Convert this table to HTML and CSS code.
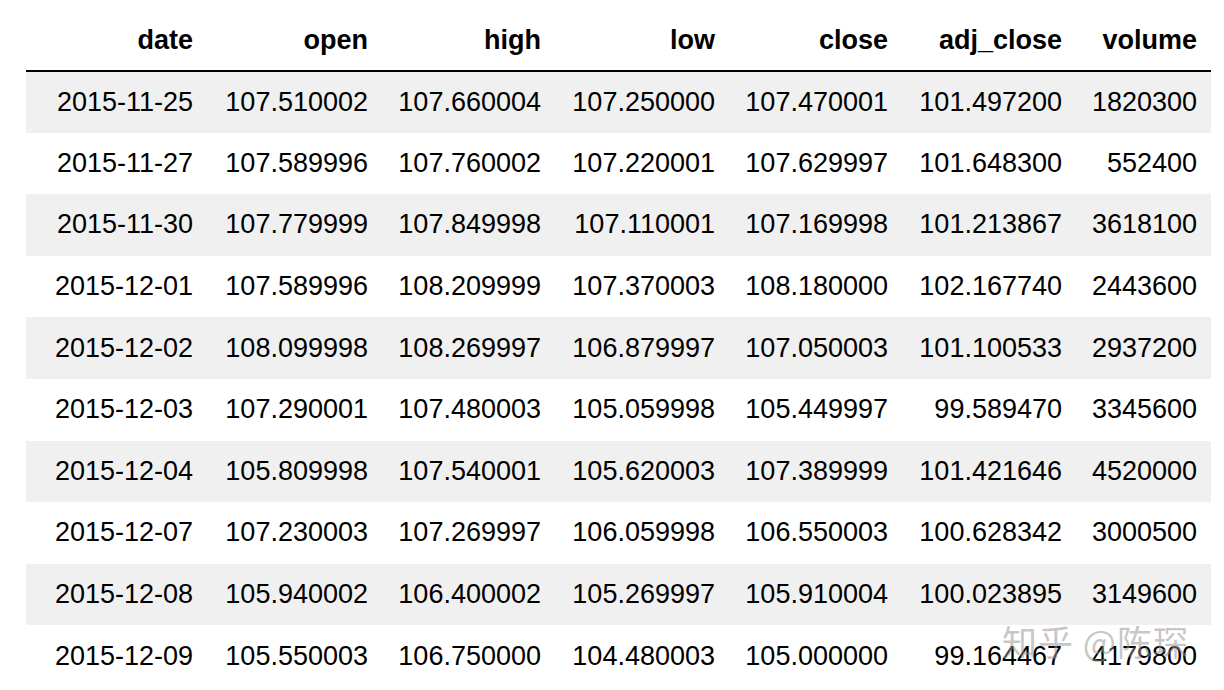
FILE: index.html
```html
<!DOCTYPE html>
<html>
<head>
<meta charset="utf-8">
<link rel="stylesheet" href="styles.css">
</head>
<body>
<div class="page">
<table class="df">
<colgroup>
<col class="c1"><col class="c2"><col class="c3"><col class="c4"><col class="c5"><col class="c6"><col class="c7">
</colgroup>
<thead>
<tr><th>date</th><th>open</th><th>high</th><th>low</th><th>close</th><th>adj_close</th><th>volume</th></tr>
</thead>
<tbody>
<tr><td>2015-11-25</td><td>107.510002</td><td>107.660004</td><td>107.250000</td><td>107.470001</td><td>101.497200</td><td>1820300</td></tr>
<tr><td>2015-11-27</td><td>107.589996</td><td>107.760002</td><td>107.220001</td><td>107.629997</td><td>101.648300</td><td>552400</td></tr>
<tr><td>2015-11-30</td><td>107.779999</td><td>107.849998</td><td>107.110001</td><td>107.169998</td><td>101.213867</td><td>3618100</td></tr>
<tr><td>2015-12-01</td><td>107.589996</td><td>108.209999</td><td>107.370003</td><td>108.180000</td><td>102.167740</td><td>2443600</td></tr>
<tr><td>2015-12-02</td><td>108.099998</td><td>108.269997</td><td>106.879997</td><td>107.050003</td><td>101.100533</td><td>2937200</td></tr>
<tr><td>2015-12-03</td><td>107.290001</td><td>107.480003</td><td>105.059998</td><td>105.449997</td><td>99.589470</td><td>3345600</td></tr>
<tr><td>2015-12-04</td><td>105.809998</td><td>107.540001</td><td>105.620003</td><td>107.389999</td><td>101.421646</td><td>4520000</td></tr>
<tr><td>2015-12-07</td><td>107.230003</td><td>107.269997</td><td>106.059998</td><td>106.550003</td><td>100.628342</td><td>3000500</td></tr>
<tr><td>2015-12-08</td><td>105.940002</td><td>106.400002</td><td>105.269997</td><td>105.910004</td><td>100.023895</td><td>3149600</td></tr>
<tr><td>2015-12-09</td><td>105.550003</td><td>106.750000</td><td>104.480003</td><td>105.000000</td><td>99.164467</td><td>4179800</td></tr>
</tbody>
</table>
<div class="watermark">知乎 @陈琛</div>
</div>
</body>
</html>
```

FILE: styles.css
```css
html, body {
  margin: 0;
  padding: 0;
  background: #ffffff;
}
.page {
  position: relative;
  width: 1224px;
  height: 690px;
  overflow: hidden;
  padding-left: 26px;
  box-sizing: border-box;
}
.df {
  border-collapse: collapse;
  table-layout: fixed;
  width: 1185px;
  font-family: "Liberation Sans", Arial, sans-serif;
  font-size: 27px;
  color: #000;
}
.c1 { width: 181px; }
.c2 { width: 175px; }
.c3 { width: 173px; }
.c4 { width: 174px; }
.c5 { width: 173px; }
.c6 { width: 174px; }
.c7 { width: 135px; }
.df th,
.df td {
  text-align: right;
  padding: 0 14px 0 0;
  white-space: nowrap;
  overflow: visible;
}
.df thead th {
  height: 71px;
  font-weight: bold;
  border-bottom: 2px solid #000;
  padding-top: 11px;
  box-sizing: border-box;
  vertical-align: middle;
}
.df tbody tr {
  height: 61.6px;
}
.df tbody td {
  height: 61.6px;
  box-sizing: border-box;
}
.df tbody tr:nth-child(odd) {
  background: #f0f0f0;
}
.watermark {
  position: absolute;
  left: 1002px;
  top: 615px;
  font-family: "Noto Sans CJK SC", sans-serif;
  font-size: 35px;
  color: rgba(150, 150, 150, 0.55);
  letter-spacing: 1px;
  white-space: nowrap;
}
```
